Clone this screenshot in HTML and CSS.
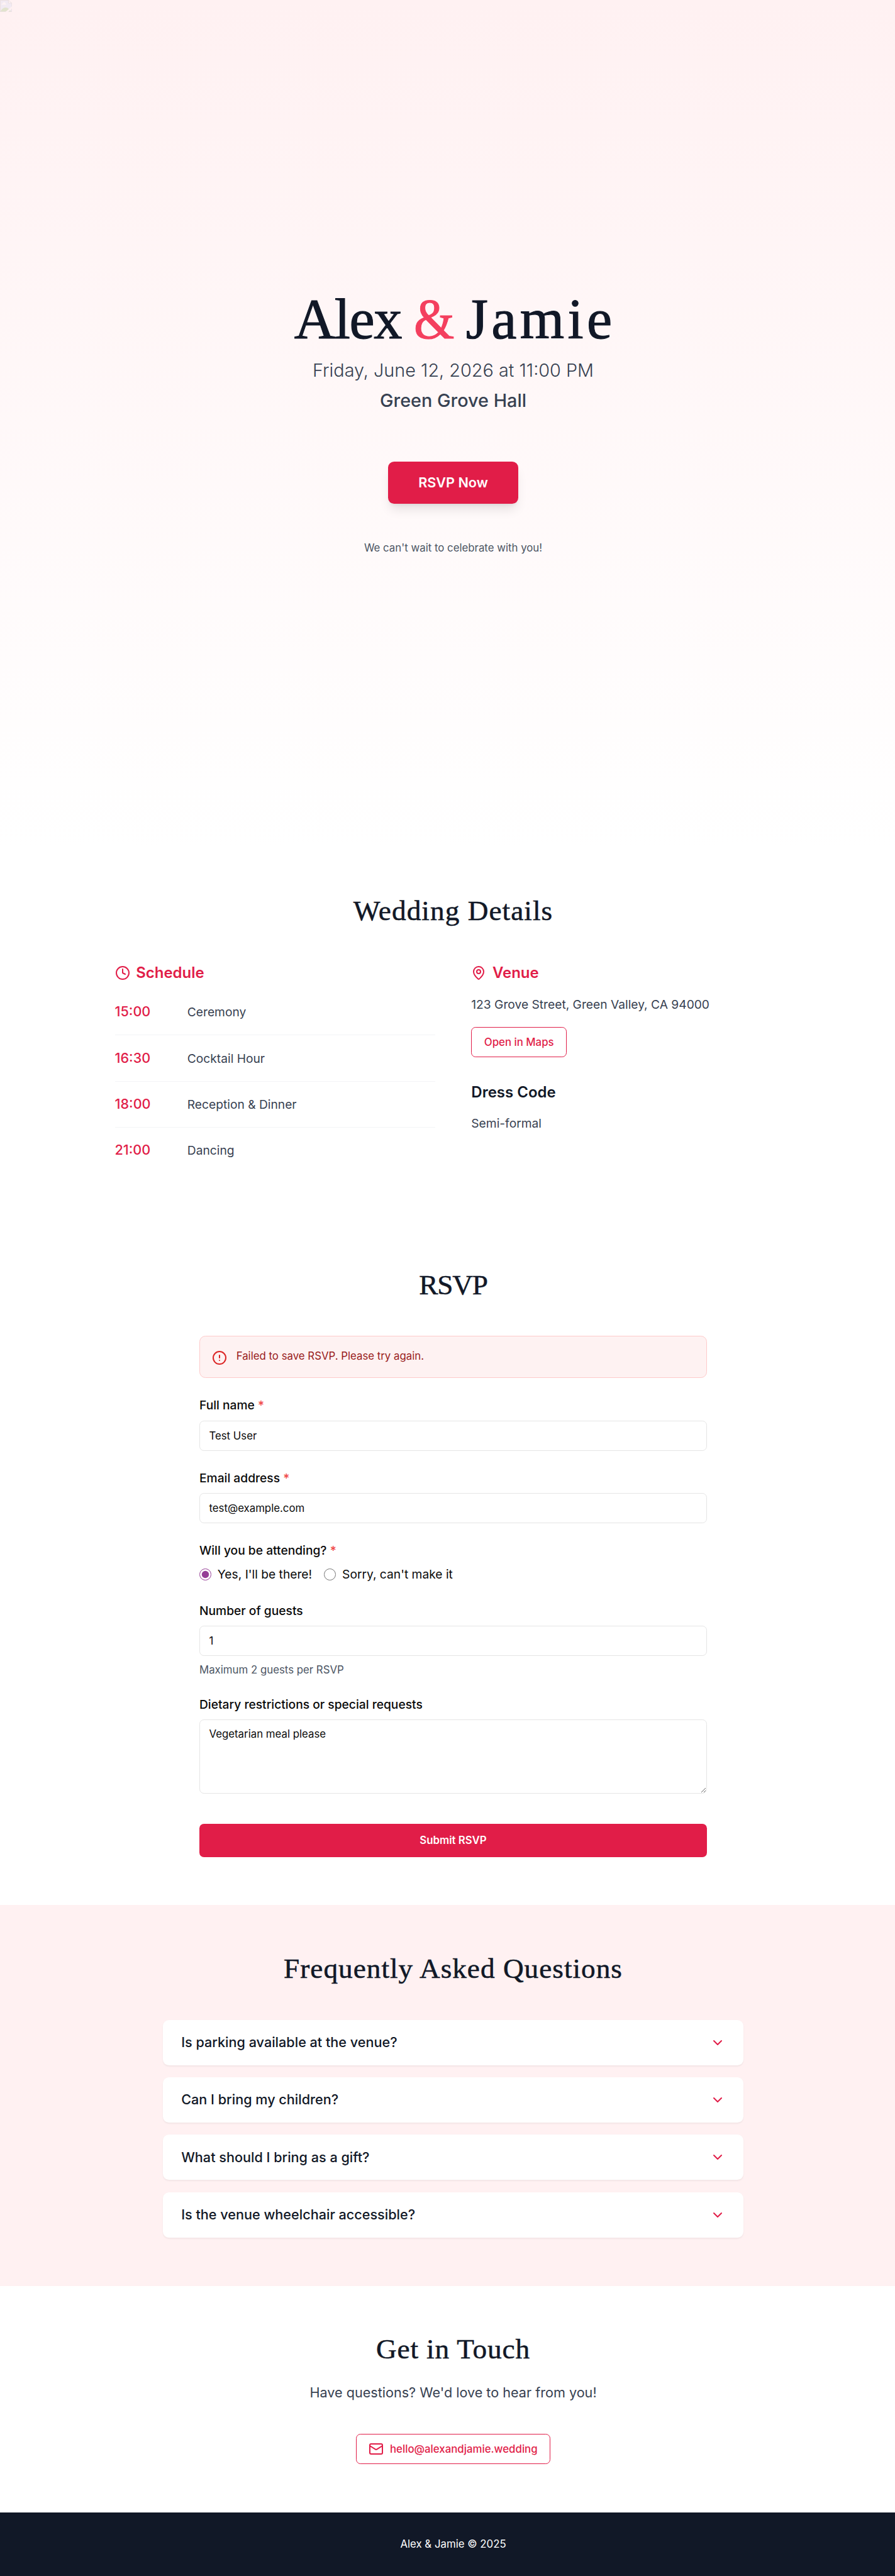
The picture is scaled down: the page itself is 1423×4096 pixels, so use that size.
FILE: index.html
```html
<!DOCTYPE html>
<html lang="en">
<head>
<meta charset="utf-8">
<title>Alex &amp; Jamie</title>
<link rel="stylesheet" href="styles.css">
</head>
<body>
<div class="page">
  <header class="hero">
    <svg class="hero-photo" viewBox="0 0 32 32" aria-hidden="true">
      <path d="M.5 .5H22.5L31.500 8.500V31.500H.5Z" fill="#c3d0f5"/>
      <path d="M4 12.500c0-2 1.500-3 3-3 .5-2 2-3.500 4-3.500s3.500 1.500 3.800 3.500c1 .2 1.500 1.500 1.200 3Z" fill="#fff"/>
      <path d="M1 31C4 24 9 20 15 20S26 25 29 31Z" fill="#72b043"/>
      <path d="M22.500 .5V8.500H31.500Z" fill="#fff"/>
      <path d="M.75 .75H22.500L31.250 8.500V31.250H.75ZM22.250 .75V8.250H31.250" fill="none" stroke="#999" stroke-width="1.500"/>
      <path d="M13 33L32.500 16V22L20 33Z" fill="#fff1f2"/>
    </svg>
    <h1 class="names"><span class="first">Alex</span> <span class="amp">&amp;</span> <span class="second">Jamie</span></h1>
    <p class="date">Friday, June 12, 2026 at 11:00 PM</p>
    <p class="place">Green Grove Hall</p>
    <a class="cta" href="#rsvp">RSVP Now</a>
    <p class="welcome">We can't wait to celebrate with you!</p>
  </header>

  <section class="section">
    <h2 class="title title-details">Wedding Details</h2>
    <div class="details">
      <div>
        <h3 class="subtitle accent">
          <svg class="icon" viewBox="0 0 24 24"><circle cx="12" cy="12" r="10"/><path d="M12 6v6l4 2"/></svg>
          Schedule
        </h3>
        <ul class="schedule">
          <li class="event"><span class="time">15:00</span><span>Ceremony</span></li>
          <li class="event"><span class="time">16:30</span><span>Cocktail Hour</span></li>
          <li class="event"><span class="time">18:00</span><span>Reception &amp; Dinner</span></li>
          <li class="event"><span class="time">21:00</span><span>Dancing</span></li>
        </ul>
      </div>
      <div>
        <h3 class="subtitle accent">
          <svg class="icon" viewBox="0 0 24 24"><path d="M20 10c0 4.993-5.539 10.193-7.399 11.799a1 1 0 0 1-1.202 0C9.539 20.193 4 14.993 4 10a8 8 0 0 1 16 0"/><circle cx="12" cy="10" r="3"/></svg>
          Venue
        </h3>
        <p class="address">123 Grove Street, Green Valley, CA 94000</p>
        <a class="outline-button" href="#map">Open in Maps</a>
        <h3 class="subtitle dress">Dress Code</h3>
        <p class="address">Semi-formal</p>
      </div>
    </div>
  </section>

  <section class="section" id="rsvp">
    <h2 class="title title-rsvp">RSVP</h2>
    <form class="form">
      <div class="alert">
        <svg class="icon alert-icon" viewBox="0 0 24 24"><circle cx="12" cy="12" r="10"/><path d="M12 8v4M12 16h.01"/></svg>
        <p>Failed to save RSVP. Please try again.</p>
      </div>
      <div class="field">
        <label class="label" for="name">Full name <span class="required">*</span></label>
        <input class="input" id="name" type="text" value="Test User">
      </div>
      <div class="field">
        <label class="label" for="email">Email address <span class="required">*</span></label>
        <input class="input" id="email" type="text" value="test@example.com">
      </div>
      <div class="field">
        <span class="label">Will you be attending? <span class="required">*</span></span>
        <div class="choices">
          <label class="choice"><input class="radio" type="radio" name="attending" checked>Yes, I'll be there!</label>
          <label class="choice"><input class="radio" type="radio" name="attending">Sorry, can't make it</label>
        </div>
      </div>
      <div class="field">
        <label class="label" for="guests">Number of guests</label>
        <input class="input" id="guests" type="text" value="1">
        <p class="hint">Maximum 2 guests per RSVP</p>
      </div>
      <div class="field">
        <label class="label" for="diet">Dietary restrictions or special requests</label>
        <textarea class="input textarea" id="diet">Vegetarian meal please</textarea>
      </div>
      <button class="submit" type="button">Submit RSVP</button>
    </form>
  </section>

  <section class="section tinted">
    <h2 class="title title-faq">Frequently Asked Questions</h2>
    <div class="faq">
      <div class="question">Is parking available at the venue?<svg class="icon accent" viewBox="0 0 24 24"><path d="m6 9 6 6 6-6"/></svg></div>
      <div class="question">Can I bring my children?<svg class="icon accent" viewBox="0 0 24 24"><path d="m6 9 6 6 6-6"/></svg></div>
      <div class="question">What should I bring as a gift?<svg class="icon accent" viewBox="0 0 24 24"><path d="m6 9 6 6 6-6"/></svg></div>
      <div class="question">Is the venue wheelchair accessible?<svg class="icon accent" viewBox="0 0 24 24"><path d="m6 9 6 6 6-6"/></svg></div>
    </div>
  </section>

  <section class="section contact">
    <h2 class="title title-contact">Get in Touch</h2>
    <p class="lead">Have questions? We'd love to hear from you!</p>
    <a class="outline-button" href="#mail">
      <svg class="icon" viewBox="0 0 24 24"><rect x="2" y="4" width="20" height="16" rx="2"/><path d="m22 7-8.970 5.700a1.940 1.940 0 0 1-2.060 0L2 7"/></svg>
      hello@alexandjamie.wedding
    </a>
  </section>

  <footer class="footer">Alex &amp; Jamie © 2025</footer>
</div>
</body>
</html>
```
FILE: styles.css
```css
html {
  font-size: 19.2135px;
  overflow: hidden;
}

*, *::before, *::after {
  box-sizing: border-box;
}

body {
  margin: 0;
  background: #fff;
  color: #0a0a0a;
  font-family: Inter, "Liberation Sans", sans-serif;
  font-size: 1rem;
  line-height: 1.5rem;
}

h1, h2, h3, p, ul {
  margin: 0;
  padding: 0;
}

ul {
  list-style: none;
}

a {
  text-decoration: none;
}

.page {
  width: 75rem;
}

.icon {
  flex: none;
  width: 1.25rem;
  height: 1.25rem;
  fill: none;
  stroke: currentColor;
  stroke-width: 2;
  stroke-linecap: round;
  stroke-linejoin: round;
}

.accent {
  color: #e11d48;
}

/* Hero */
.hero {
  position: relative;
  display: flex;
  flex-direction: column;
  align-items: center;
  justify-content: center;
  height: 70.125rem;
  background: linear-gradient(to bottom, #fff1f2, #fff);
  text-align: center;
}

.hero-photo {
  position: absolute;
  top: 0;
  left: 0;
  width: 1rem;
  height: 1rem;
  opacity: .2;
}

.names {
  margin-bottom: 1rem;
  color: #111827;
  font-family: "Liberation Serif", serif;
  font-size: 4.71rem;
  font-weight: 400;
  line-height: 4.5rem;
  white-space: nowrap;
  -webkit-text-stroke: .012em currentColor;
}

.first { letter-spacing: -.07rem; }

.amp {
  display: inline-block;
  margin: 0 -.38rem 0 -.31rem;
  color: #f43f5e;
  transform: scaleX(.915);
}

.second {
  margin-right: -.28rem;
  letter-spacing: .28rem;
}

.date, .place {
  color: #374151;
  font-size: 1.5rem;
  line-height: 2rem;
}

.date {
  margin-bottom: .5rem;
  font-weight: 300;
}

.place {
  margin-bottom: 4rem;
  font-weight: 500;
}

.cta {
  margin-bottom: 3rem;
  padding: .875rem 2.5rem;
  border-radius: .5rem;
  background: #e11d48;
  box-shadow: 0 .625rem .9375rem -.1875rem rgba(0, 0, 0, .1), 0 .25rem .375rem -.25rem rgba(0, 0, 0, .1);
  color: #fff;
  font-size: 1.125rem;
  font-weight: 600;
  line-height: 1.75rem;
}

.welcome {
  color: #4b5563;
  font-size: .875rem;
  line-height: 1.25rem;
}

/* Sections */
.section {
  padding: 4rem 0;
}

.tinted {
  background: #fff1f2;
}

.title {
  margin-bottom: 3rem;
  color: #111827;
  font-family: "Liberation Serif", serif;
  font-size: 2.356rem;
  font-weight: 400;
  line-height: 2.5rem;
  text-align: center;
  -webkit-text-stroke: .012em currentColor;
}

.title-details { letter-spacing: .055rem; }
.title-rsvp { letter-spacing: -.06rem; }
.title-faq { letter-spacing: .052rem; }
.title-contact { margin-bottom: 1.5rem; letter-spacing: .044rem; }

.subtitle {
  display: flex;
  align-items: center;
  gap: .5rem;
  margin-bottom: 1rem;
  font-size: 1.25rem;
  font-weight: 600;
  line-height: 1.75rem;
}

/* Details */
.details {
  display: grid;
  grid-template-columns: 1fr 1fr;
  gap: 3rem;
  width: 56rem;
  margin: 0 auto;
}

.schedule {
  margin-top: -.5rem;
}

.event {
  display: flex;
  align-items: baseline;
  height: 3.8125rem;
  padding: 1rem 0;
  border-bottom: 1px solid #f3f4f6;
  color: #374151;
}

.event:last-child {
  height: 3.75rem;
  border-bottom: 0;
}

.time {
  width: 6rem;
  color: #e11d48;
  font-size: 1.125rem;
  font-weight: 500;
  line-height: 1.75rem;
}

.address {
  color: #374151;
}

.outline-button {
  display: inline-flex;
  align-items: center;
  gap: .5rem;
  height: 2.5rem;
  padding: 0 1.0125rem;
  border: 1px solid #e11d48;
  border-radius: .375rem;
  color: #e11d48;
  font-size: .875rem;
  font-weight: 500;
  line-height: 1.25rem;
}

.details .outline-button {
  display: flex;
  width: fit-content;
  margin: 1.125rem 0 2rem;
}

.dress {
  color: #111827;
}

/* RSVP form */
.form {
  display: flex;
  flex-direction: column;
  gap: 1.5rem;
  width: 42rem;
  margin: 0 auto;
}

.alert {
  display: flex;
  align-items: flex-start;
  gap: .75rem;
  height: 3.5rem;
  padding: 1rem;
  border: 1px solid #fecaca;
  border-radius: .5rem;
  background: #fef2f2;
  color: #991b1b;
  font-size: .875rem;
  line-height: 1.25rem;
}

.alert-icon {
  margin-top: .125rem;
  color: #dc2626;
}

.field {
  display: flex;
  flex-direction: column;
  gap: .5rem;
}

.label {
  font-weight: 500;
}

.required {
  color: #ef4444;
}

.input {
  display: block;
  width: 100%;
  height: 2.5rem;
  margin: 0;
  padding: .5rem .75rem;
  border: 1px solid #e5e5e5;
  border-radius: .375rem;
  outline: 0;
  background: #fff;
  color: #0a0a0a;
  font: 400 .875rem/1.25rem Inter, "Liberation Sans", sans-serif;
}

.textarea {
  height: 6.125rem;
  resize: vertical;
}

.choices {
  display: flex;
  gap: 1rem;
}

.choice {
  display: flex;
  align-items: center;
  gap: .5rem;
}

.radio {
  width: 1rem;
  height: 1rem;
  margin: 0;
  accent-color: #953d96;
}

.hint {
  color: #4b5563;
  font-size: .875rem;
  line-height: 1.25rem;
}

.submit {
  height: 2.75rem;
  margin-top: 1rem;
  padding: 0;
  border: 0;
  border-radius: .375rem;
  background: #e11d48;
  color: #fff;
  font: 600 .875rem/1.25rem Inter, "Liberation Sans", sans-serif;
}

/* FAQ */
.faq {
  display: flex;
  flex-direction: column;
  gap: 1rem;
  width: 48rem;
  margin: 0 auto;
}

.question {
  display: flex;
  align-items: center;
  justify-content: space-between;
  height: 3.75rem;
  padding: 0 1.5rem;
  border-radius: .5rem;
  background: #fff;
  box-shadow: 0 .0625rem .125rem rgba(0, 0, 0, .05);
  color: #111827;
  font-size: 1.125rem;
  font-weight: 500;
  line-height: 1.75rem;
}

/* Contact */
.contact {
  display: flex;
  flex-direction: column;
  align-items: center;
}

.lead {
  margin-bottom: 2.5rem;
  color: #374151;
  font-size: 1.125rem;
  line-height: 1.75rem;
}

.footer {
  padding: 2rem 0;
  background: #111827;
  color: #fff;
  font-size: .875rem;
  line-height: 1.25rem;
  text-align: center;
}
```
